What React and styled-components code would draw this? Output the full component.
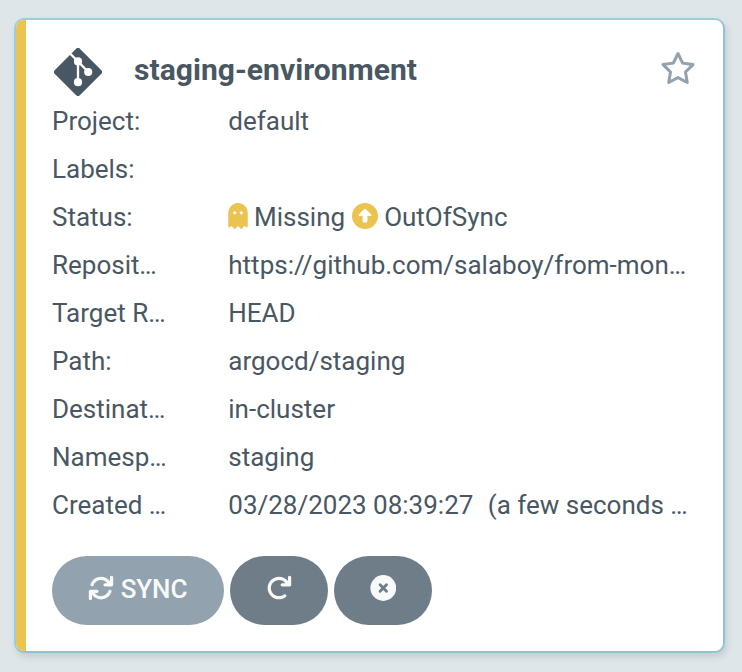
import React from "react";
import styled, { createGlobalStyle } from "styled-components";
import { FaRegStar, FaCircleUp } from "react-icons/fa6";

const GlobalStyle = createGlobalStyle`
  * { box-sizing: border-box; }
  body {
    margin: 0;
    background: #dee6e9;
    font-family: Roboto, "Liberation Sans", sans-serif;
    color: #495763;
  }
`;

const Page = styled.main`
  height: 672px;
  padding: 18px 17px 19px 14px;
`;

const Card = styled.article`
  height: 635px;
  display: flex;
  overflow: hidden;
  border: 2px solid #8fc4d1;
  border-top-color: #9ccddb;
  border-left-color: #9ccddb;
  border-radius: 10px;
  background: #fff;
  box-shadow: 2px 4px 6px rgba(100, 110, 125, 0.2);
`;

const StatusStripe = styled.div`
  width: 10px;
  flex: none;
  background: #ebc351;
`;

const Content = styled.div`
  flex: 1;
  min-width: 0;
  padding: 25px 26px 0;
`;

const Header = styled.header`
  height: 52px;
  display: flex;
  align-items: center;
`;

const GitMark = styled.svg`
  width: 48px;
  height: 48px;
  margin: 2px 2px 0;
  flex: none;
`;

const Title = styled.h1`
  flex: 1;
  margin: 0 0 2px 30px;
  font-size: 30px;
  line-height: 36px;
  font-weight: 700;
  letter-spacing: 0.05px;
`;

const StarIcon = styled(FaRegStar)`
  width: 36px;
  height: 32px;
  margin: 0 1px 6px 0;
  color: #92a2af;
`;

const Row = styled.div`
  height: 48px;
  display: grid;
  grid-template-columns: 116px 461px;
  column-gap: 60.3px;
  font-size: 26px;
  line-height: 48px;
`;

const Cell = styled.div`
  overflow: hidden;
  text-overflow: ellipsis;
  white-space: pre;
`;

const Relative = styled.span`
  margin-left: 1.5px;
`;

const Statuses = styled.div`
  display: flex;
  align-items: center;
  margin-left: -0.3px;
`;

const StatusIcon = styled.span`
  display: flex;
  margin: 0 6px 2px ${(p) => (p.$spaced ? 7 : 0)}px;
  color: #ebc351;
  svg {
    width: ${(p) => p.$width}px;
    height: 26px;
  }
`;

const Actions = styled.footer`
  display: flex;
  gap: 6px;
  margin-top: 27px;
`;

const Button = styled.button`
  width: ${(p) => p.$width}px;
  height: 69px;
  padding: 0 0 4px;
  border: 0;
  border-radius: 35px;
  display: flex;
  align-items: center;
  justify-content: center;
  gap: 7px;
  background: ${(p) => (p.$muted ? "#92a2af" : "#6f7d88")};
  color: #f8fafa;
  font: 500 26px/30px Roboto, sans-serif;
  svg {
    width: 26px;
    height: 26px;
    margin-bottom: 2px;
  }
`;

const Label = styled.span`
  letter-spacing: -0.1px;
  margin-right: 1px;
`;

const GitIcon = () => (
  <GitMark viewBox="0 0 48 48" aria-hidden="true">
    <path
      fill="#495763"
      d="M21.9 .9a3 3 0 0 1 4.2 0l21 21a3 3 0 0 1 0 4.2l-21 21a3 3 0 0 1-4.2 0l-21-21a3 3 0 0 1 0-4.2z"
    />
    <path d="M15.8 5.2L24 13.4L34 23.8M24 13.4V34" fill="none" stroke="#fff" strokeWidth="2.3" />
    <g fill="#fff">
      <circle cx="24" cy="13.4" r="4.1" />
      <circle cx="34.2" cy="24" r="4.1" />
      <circle cx="24" cy="34.2" r="4.1" />
    </g>
  </GitMark>
);

const GhostIcon = () => (
  <svg viewBox="0 0 384 512" fill="currentColor" aria-hidden="true">
    <path d="M186.1 .1C81 3.2 0 94.8 0 200v264c0 14.25 17.3 21.38 27.3 11.25l24.95-18.5c6.6-5 16-4 21.5 2.25l43 48.3c6.25 6.25 16.37 6.25 22.62 0l40.62-45.8c6.4-7.25 17.6-7.25 24 0l40.63 45.8c6.25 6.25 16.38 6.25 22.62 0l43-48.3c5.5-6.25 14.88-7.25 21.5-2.25l24.95 18.5c10 10.13 27.3 3 27.3-11.25V192C384 84 294.9-3.1 186.1 .1zM128 224a32 32 0 1 1 0-64 32 32 0 0 1 0 64zM256 224a32 32 0 1 1 0-64 32 32 0 0 1 0 64z" />
  </svg>
);

const SyncIcon = () => (
  <svg viewBox="0 0 512 512" fill="currentColor" aria-hidden="true">
    <path d="M464 16c-17.67 0-32 14.31-32 32v74.09C392.1 66.52 327.4 32 256 32C161.5 32 78.59 92.34 49.58 182.2c-5.438 16.81 3.797 34.88 20.61 40.28c16.89 5.5 34.88-3.812 40.3-20.59C130.9 138.5 189.4 96 256 96c50.5 0 96.26 24.55 124.4 64H336c-17.67 0-32 14.31-32 32s14.33 32 32 32h128c17.67 0 32-14.31 32-32V48C496 30.31 481.7 16 464 16zM441.8 289.6c-16.92-5.438-34.88 3.812-40.3 20.59C381.1 373.5 322.6 416 256 416c-50.5 0-96.25-24.55-124.4-64H176c17.67 0 32-14.31 32-32s-14.33-32-32-32h-128c-17.67 0-32 14.31-32 32v144c0 17.69 14.33 32 32 32s32-14.31 32-32v-74.09C119.9 445.5 184.6 480 256 480c94.45 0 177.4-60.34 206.4-150.2C467.9 313 458.6 294.1 441.8 289.6z" />
  </svg>
);

const RefreshIcon = () => (
  <svg viewBox="0 0 512 512" fill="currentColor" aria-hidden="true">
    <path d="M496 48V192c0 17.69-14.31 32-32 32H320c-17.69 0-32-14.31-32-32s14.31-32 32-32h63.39c-29.97-39.7-77.25-63.78-127.6-63.78C167.7 96.22 96 167.9 96 256s71.69 159.8 159.8 159.8c34.88 0 68.03-11.03 95.88-31.94c14.22-10.53 34.22-7.75 44.81 6.375c10.59 14.16 7.75 34.22-6.375 44.81c-39.03 29.28-85.36 44.86-134.2 44.86C132.5 479.9 32 379.4 32 256s100.5-223.9 223.9-223.9c69.15 0 134 32.47 176.1 86.12V48c0-17.69 14.31-32 32-32S496 30.31 496 48z" />
  </svg>
);

const DeleteIcon = () => (
  <svg viewBox="0 0 26 26" aria-hidden="true">
    <circle cx="13.3" cy="13" r="12.9" fill="currentColor" />
    <path d="M10.1 9.8l6.4 6.4M16.5 9.8l-6.4 6.4" stroke="#6f7d88" strokeWidth="2.9" strokeLinecap="round" />
  </svg>
);

const before = [
  ["Project:", "default"],
  ["Labels:", ""],
];

const after = [
  ["Repository:", "https://github.com/salaboy/from-monolith-to-k8s"],
  ["Target Revision:", "HEAD"],
  ["Path:", "argocd/staging"],
  ["Destination:", "in-cluster"],
  ["Namespace:", "staging"],
];

const Field = ({ label, children }) => (
  <Row>
    <Cell>{label}</Cell>
    <Cell>{children}</Cell>
  </Row>
);

export default function App() {
  return (
    <Page>
      <GlobalStyle />
      <Card>
        <StatusStripe />
        <Content>
          <Header>
            <GitIcon />
            <Title>staging-environment</Title>
            <StarIcon />
          </Header>
          {before.map(([label, value]) => (
            <Field key={label} label={label}>{value}</Field>
          ))}
          <Row>
            <Cell>Status:</Cell>
            <Statuses>
              <StatusIcon $width={20}><GhostIcon /></StatusIcon>
              Missing
              <StatusIcon $width={26} $spaced><FaCircleUp /></StatusIcon>
              OutOfSync
            </Statuses>
          </Row>
          {after.map(([label, value]) => (
            <Field key={label} label={label}>{value}</Field>
          ))}
          <Field label="Created At:">
            {"03/28/2023 08:39:27  "}
            <Relative>(a few seconds ago)</Relative>
          </Field>
          <Actions>
            <Button $width={172} $muted><SyncIcon /><Label>SYNC</Label></Button>
            <Button $width={98} aria-label="Refresh"><RefreshIcon /></Button>
            <Button $width={98} aria-label="Delete"><DeleteIcon /></Button>
          </Actions>
        </Content>
      </Card>
    </Page>
  );
}
